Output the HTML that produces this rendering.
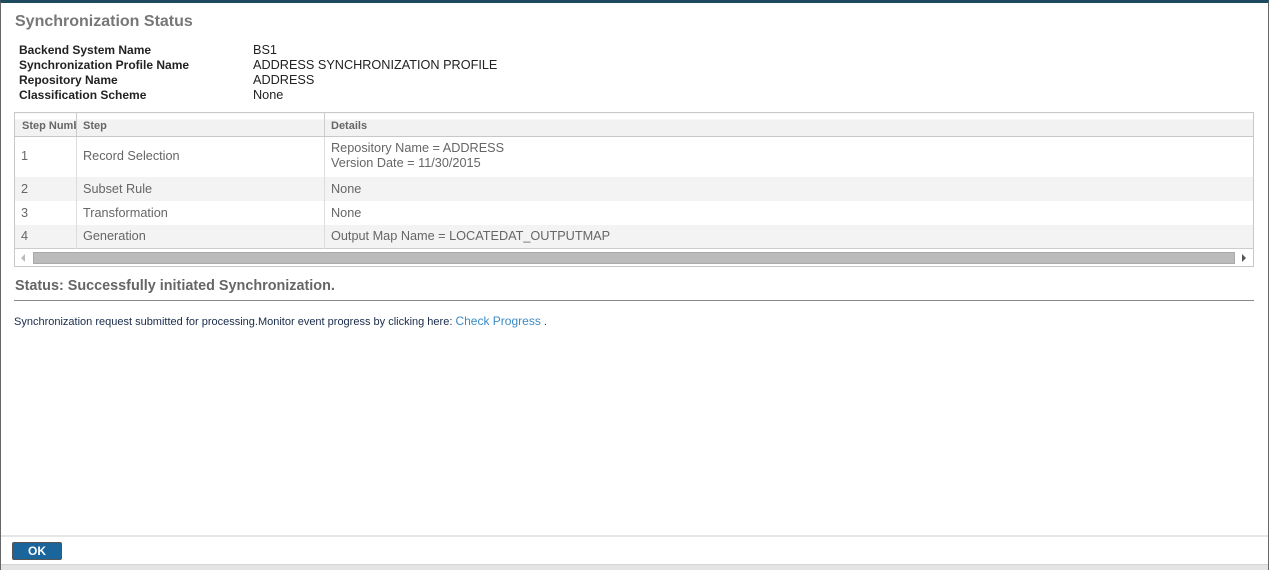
<!DOCTYPE html>
<html><head><style>
*{margin:0;padding:0;box-sizing:border-box}
body{width:1269px;height:570px;background:#fff;font-family:"Liberation Sans",Arial,sans-serif;position:relative;overflow:hidden}
.frame{position:absolute;left:0;top:0;width:1269px;height:570px;border-left:1px solid #666;border-right:1px solid #666;border-top:3px solid #1d4a5e}
.a{position:absolute;white-space:nowrap}
h1{position:absolute;left:15px;top:13px;font-size:16px;font-weight:bold;color:#777}
.lbl{font-size:12px;font-weight:bold;color:#222;left:19px}
.val{font-size:12.7px;color:#222;left:253px;line-height:15px}
table{position:absolute;left:14px;top:112px;width:1240px;border:1px solid #c8c8c8;border-collapse:collapse;font-size:12.7px;color:#666}
td{border-left:1px solid #ddd;padding:0 6px;vertical-align:middle}
.hd td{height:24px;font-size:11px;font-weight:bold;color:#666;background:linear-gradient(#fff 0,#fff 6px,#f2f2f2 6px);border-bottom:1px solid #c8c8c8;border-left:1px solid #ccc;padding-top:2px}
.g td{background:#f3f3f3}
.sc td{height:18px;padding:0;border-top:1px solid #ccc}
</style></head><body>
<div class="frame"></div>
<h1>Synchronization Status</h1>
<div class="a lbl" style="top:43px">Backend System Name</div>
<div class="a lbl" style="top:58px">Synchronization Profile Name</div>
<div class="a lbl" style="top:73px">Repository Name</div>
<div class="a lbl" style="top:88px">Classification Scheme</div>
<div class="a val" style="top:43px">BS1</div>
<div class="a val" style="top:58px">ADDRESS SYNCHRONIZATION PROFILE</div>
<div class="a val" style="top:73px">ADDRESS</div>
<div class="a val" style="top:88px">None</div>
<table>
<tr class="hd"><td style="width:62px;padding-left:7px;border-left:none;overflow:hidden;white-space:nowrap;max-width:62px">Step Numb</td><td style="width:248px">Step</td><td>Details</td></tr>
<tr><td style="height:40px;border-left:none;padding-bottom:2px">1</td><td style="padding-bottom:2px">Record Selection</td><td style="padding-bottom:2px;line-height:15px">Repository Name = ADDRESS<br>Version Date = 11/30/2015</td></tr>
<tr class="g"><td style="height:24px;border-left:none">2</td><td>Subset Rule</td><td>None</td></tr>
<tr><td style="height:24px;border-left:none">3</td><td>Transformation</td><td>None</td></tr>
<tr class="g"><td style="height:24px;border-left:none">4</td><td>Generation</td><td>Output Map Name = LOCATEDAT_OUTPUTMAP</td></tr>
<tr class="sc"><td colspan="3" style="border-left:none;position:relative;background:#fff"><div style="position:absolute;left:18px;right:18px;top:3px;height:12px;background:#bbb;border:1px solid #aaa"></div><div style="position:absolute;left:6px;top:5px;width:0;height:0;border-top:4px solid transparent;border-bottom:4px solid transparent;border-right:4px solid #bbb"></div><div style="position:absolute;right:7px;top:5px;width:0;height:0;border-top:4px solid transparent;border-bottom:4px solid transparent;border-left:4px solid #555"></div></td></tr>
</table>
<div class="a" style="left:15px;top:278px;font-size:14.4px;font-weight:bold;color:#666">Status: Successfully initiated Synchronization.</div>
<div class="a" style="left:14px;top:300px;width:1240px;height:1px;background:#888"></div>
<div class="a" style="left:14px;top:314px;font-size:11px;color:#1a2b4a">Synchronization request submitted for processing.Monitor event progress by clicking here: <span style="font-size:12px;color:#3a8ac4">Check Progress</span> .</div>
<div class="a" style="left:1px;top:535px;width:1267px;height:2px;background:#e6e6e6"></div>
<div class="a" style="left:12px;top:542px;width:50px;height:18px;background:#1a659c;border:1px solid #555;border-radius:2px;color:#fff;font-weight:bold;font-size:12px;text-align:center;line-height:16px">OK</div>
<div class="a" style="left:1px;top:564px;width:1267px;height:6px;background:#e4e4e4;border-top:1px solid #d4d4d4"></div>
</body></html>
